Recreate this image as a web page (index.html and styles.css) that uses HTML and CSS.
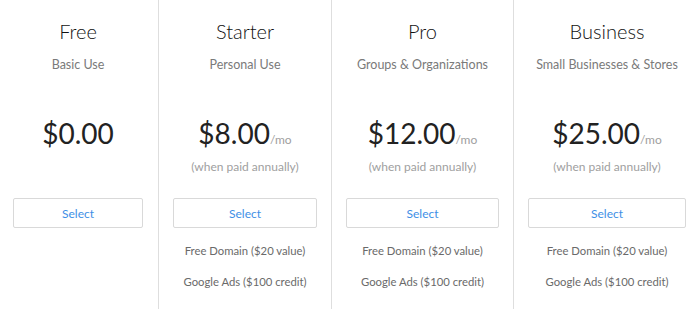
FILE: index.html
```html
<!DOCTYPE html>
<html lang="en">
  <head>
    <meta charset="UTF-8">
    <meta name="viewport" content="width=device-width, initial-scale=1.0">
    <title>Plans</title>
    <link rel="stylesheet" href="styles.css">
  </head>
  <body>
    <div class="plans">
      <div class="plan">
        <h2 class="plan-name">Free</h2>
        <p class="plan-use">Basic Use</p>
        <div class="plan-price">
          <div class="price">$0.00</div>
        </div>
        <button class="select-btn">Select</button>
      </div>
      <div class="plan">
        <h2 class="plan-name">Starter</h2>
        <p class="plan-use">Personal Use</p>
        <div class="plan-price">
          <div class="price">$8.00<span class="per">/mo</span></div>
          <div class="billing">(when paid annually)</div>
        </div>
        <button class="select-btn">Select</button>
        <ul class="features">
          <li>Free Domain ($20 value)</li>
          <li>Google Ads ($100 credit)</li>
        </ul>
      </div>
      <div class="plan">
        <h2 class="plan-name">Pro</h2>
        <p class="plan-use">Groups &amp; Organizations</p>
        <div class="plan-price">
          <div class="price">$12.00<span class="per">/mo</span></div>
          <div class="billing">(when paid annually)</div>
        </div>
        <button class="select-btn">Select</button>
        <ul class="features">
          <li>Free Domain ($20 value)</li>
          <li>Google Ads ($100 credit)</li>
        </ul>
      </div>
      <div class="plan">
        <h2 class="plan-name">Business</h2>
        <p class="plan-use">Small Businesses &amp; Stores</p>
        <div class="plan-price">
          <div class="price">$25.00<span class="per">/mo</span></div>
          <div class="billing">(when paid annually)</div>
        </div>
        <button class="select-btn">Select</button>
        <ul class="features">
          <li>Free Domain ($20 value)</li>
          <li>Google Ads ($100 credit)</li>
        </ul>
      </div>
    </div>
  </body>
</html>
```
FILE: styles.css
```css
/* Tabela de planos */
body {
    margin: 0;
    font-family: 'Lato', 'Open Sans', Arial, sans-serif;
    background: #fff;
    color: #222;
}

.plans {
    display: grid;
    grid-template-columns: 158px 173px 182px 1fr;
    height: 309px;
}

.plan {
    display: flex;
    flex-direction: column;
    align-items: stretch;
    padding: 19px 14px 0;
    text-align: center;
    border-left: 1px solid #dedede;
}

.plan:first-child {
    border-left: none;
    padding-left: 13px;
    padding-right: 15px;
}

.plan-name {
    margin: 0;
    font-size: 20px;
    font-weight: 300;
    line-height: 24px;
    color: #111;
}

.plan-use {
    margin: 14px 0 0;
    font-size: 12.5px;
    line-height: 16px;
    color: #7a7a7a;
}

/* Preço */
.plan-price {
    margin-top: 43px;
    height: 52px;
}

.price {
    font-size: 28px;
    font-weight: 400;
    line-height: 34px;
    color: #222;
}

.per {
    font-size: 12px;
    color: #a0a0a0;
}

.billing {
    margin-top: 2px;
    font-size: 12px;
    line-height: 16px;
    color: #a0a0a0;
}

/* Botão */
.select-btn {
    margin-top: 30px;
    height: 30px;
    background: #fff;
    border: 1px solid #d9d9d9;
    border-radius: 2px;
    color: #3e8fe6;
    font-family: inherit;
    font-size: 12px;
    cursor: pointer;
}

.select-btn:hover {
    border-color: #3e8fe6;
}

/* Recursos */
.features {
    list-style: none;
    margin: 15px 0 0;
    padding: 0;
}

.features li {
    font-size: 11.3px;
    line-height: 16px;
    color: #6a6a6a;
    margin-bottom: 15px;
}
```
